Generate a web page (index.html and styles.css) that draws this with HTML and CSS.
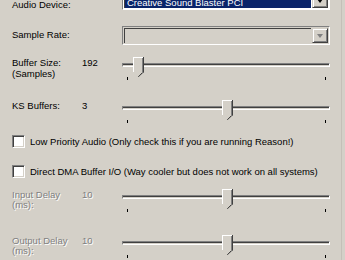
FILE: index.html
```html
<!doctype html>
<html>
<head>
<meta charset="utf-8">
<title>ASIO Settings</title>
<link rel="stylesheet" href="styles.css">
</head>
<body>
<div class="panel">
	<div class="row combo-row top">
		<span class="label">Audio Device:</span>
		<span></span>
		<div class="combo">
			<div class="field sel">Creative Sound Blaster PCI</div>
			<div class="btn"><i class="arrow"></i></div>
		</div>
	</div>
	<div class="row combo-row rate">
		<span class="label">Sample Rate:</span>
		<span></span>
		<div class="combo off">
			<div class="field"></div>
			<div class="btn"><i class="arrow"></i></div>
		</div>
	</div>
	<div class="row slider-row buf">
		<span class="label">Buffer Size:<br>(Samples)</span>
		<span class="val">192</span>
		<div class="slider">
			<div class="channel"></div>
			<div class="thumb" style="left:11px"></div>
			<div class="ticks"><i></i><i></i></div>
		</div>
	</div>
	<div class="row slider-row ks">
		<span class="label">KS Buffers:</span>
		<span class="val">3</span>
		<div class="slider">
			<div class="channel"></div>
			<div class="thumb" style="left:100px"></div>
			<div class="ticks"><i></i><i></i></div>
		</div>
	</div>
	<label class="check first"><span class="box"></span>Low Priority Audio (Only check this if you are running Reason!)</label>
	<label class="check"><span class="box"></span>Direct DMA Buffer I/O (Way cooler but does not work on all systems)</label>
	<div class="row slider-row dis indelay">
		<span class="label">Input Delay<br>(ms):</span>
		<span class="val">10</span>
		<div class="slider">
			<div class="channel"></div>
			<div class="thumb" style="left:100px"></div>
			<div class="ticks"><i></i><i></i></div>
		</div>
	</div>
	<div class="row slider-row dis outdelay">
		<span class="label">Output Delay<br>(ms):</span>
		<span class="val">10</span>
		<div class="slider">
			<div class="channel"></div>
			<div class="thumb" style="left:100px"></div>
			<div class="ticks"><i></i><i></i></div>
		</div>
	</div>
</div>
</body>
</html>
```
FILE: styles.css
```css
*{margin:0;padding:0;box-sizing:border-box}
html,body{height:100%;overflow:hidden}
body{background:#d4d0c8;font:9.5px/11px "Liberation Sans",Arial,sans-serif;color:#000}
.panel{margin-top:-8px;padding:0 0 0 12px;height:300px;border-right:1px solid #c4c0b8;width:342px}

.row{display:grid;grid-template-columns:70px 40px 208px}
.combo-row{align-items:center}
.top .label{padding-top:7px}
.top .combo{height:18px}
.top .field{padding-top:1px}
.rate{margin-top:16px}
.rate .label{padding-bottom:3px}
.buf{margin-top:12px}
.ks{margin-top:19px}
.indelay{margin-top:11px}
.outdelay{margin-top:22px}
.dis .label,.dis .val{color:#808080;text-shadow:1px 1px 0 #fff;line-height:10px;padding-top:1px}

/* combo box */
.combo{display:flex;height:19px;border:1px solid;border-color:#808080 #fff #fff #808080;background:#fff}
.combo .field{flex:1;margin:1px;line-height:13px;padding-left:2px;color:#fff;border-top:1px solid #404040;border-left:1px solid #404040}
.combo .sel{background:#0a246a}
.combo.off{background:#d4d0c8}
.combo.off .field{border-color:#404040}
.btn{width:16px;margin:1px 1px 1px 0;background:#d4d0c8;border:1px solid;border-color:#d4d0c8 #404040 #404040 #d4d0c8;box-shadow:inset 1px 1px 0 #fff,inset -1px -1px 0 #808080;display:flex;align-items:center;justify-content:center}
.arrow{width:0;height:0;border-left:3.5px solid transparent;border-right:3.5px solid transparent;border-top:4px solid #000}
.off .arrow{border-top-color:#808080}

/* trackbar */
.slider{position:relative;height:24px}
.channel{position:absolute;left:0;right:0;top:6px;height:4px;border:1px solid;border-color:#808080 #fff #fff #808080;background:#404040;box-shadow:inset 0 -1px 0 #d4d0c8}
.thumb{position:absolute;top:0;width:11px;height:20px;clip-path:polygon(0 0,100% 0,100% 15px,50% 20px,0 15px);
	background:
		linear-gradient(#fff,#fff) 0 0/1px 15px no-repeat,
		linear-gradient(#fff,#fff) 0 0/10px 1px no-repeat,
		linear-gradient(#404040,#404040) 10px 0/1px 16px no-repeat,
		linear-gradient(#808080,#808080) 9px 1px/1px 15px no-repeat,
		linear-gradient(135deg,transparent 3.5px,#404040 3.5px,#404040 5px,transparent 5px) 5px 15px/6px 5px no-repeat,
		#d4d0c8}
.ticks{position:absolute;left:5px;right:4px;top:20px;display:flex;justify-content:space-between}
.ticks i{display:block;width:1px;height:3px;background:#000}

/* checkbox */
.check{display:flex;align-items:center;gap:5px;height:13px;margin-top:17px}
.check.first{margin-top:11px}
.box{width:13px;height:13px;background:#fff;border:1px solid;border-color:#808080 #fff #fff #808080;box-shadow:inset 1px 1px 0 #404040,inset -1px -1px 0 #d4d0c8}
```
